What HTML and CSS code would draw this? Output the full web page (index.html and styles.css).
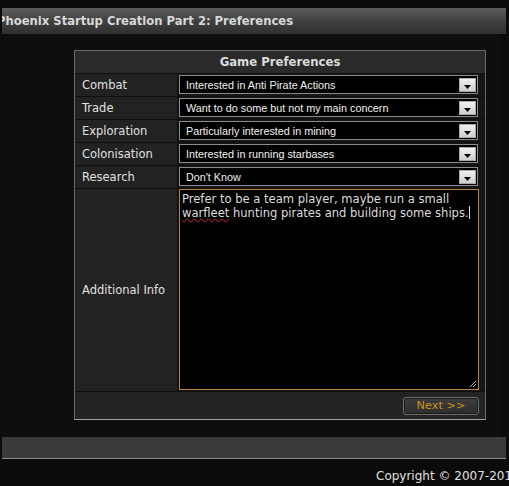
FILE: index.html
```html
<!DOCTYPE html>
<html>
<head>
<meta charset="utf-8">
<link rel="stylesheet" href="styles.css">
</head>
<body>
<div class="page">
  <div class="header"><span class="header-text">Phoenix Startup Creation Part 2: Preferences</span></div>
  <div class="main">
    <div class="panel">
      <div class="panel-title">Game Preferences</div>
      <div class="row">
        <div class="label">Combat</div>
        <div class="field"><div class="select"><span class="select-text">Interested in Anti Pirate Actions</span><span class="select-btn"><svg width="7" height="4" viewBox="0 0 7 4"><path d="M0 0H7L3.5 4Z" fill="#000"/></svg></span></div></div>
      </div>
      <div class="row">
        <div class="label">Trade</div>
        <div class="field"><div class="select"><span class="select-text">Want to do some but not my main concern</span><span class="select-btn"><svg width="7" height="4" viewBox="0 0 7 4"><path d="M0 0H7L3.5 4Z" fill="#000"/></svg></span></div></div>
      </div>
      <div class="row">
        <div class="label">Exploration</div>
        <div class="field"><div class="select"><span class="select-text">Particularly interested in mining</span><span class="select-btn"><svg width="7" height="4" viewBox="0 0 7 4"><path d="M0 0H7L3.5 4Z" fill="#000"/></svg></span></div></div>
      </div>
      <div class="row">
        <div class="label">Colonisation</div>
        <div class="field"><div class="select"><span class="select-text">Interested in running starbases</span><span class="select-btn"><svg width="7" height="4" viewBox="0 0 7 4"><path d="M0 0H7L3.5 4Z" fill="#000"/></svg></span></div></div>
      </div>
      <div class="row">
        <div class="label">Research</div>
        <div class="field"><div class="select"><span class="select-text">Don't Know</span><span class="select-btn"><svg width="7" height="4" viewBox="0 0 7 4"><path d="M0 0H7L3.5 4Z" fill="#000"/></svg></span></div></div>
      </div>
      <div class="row row-tall">
        <div class="label label-mid">Additional Info</div>
        <div class="field field-tall">
          <div class="textarea">Prefer to be a team player, maybe run a small <span class="misspelled">warfleet</span> hunting pirates and building some ships.<span class="caret"></span>
            <svg class="grip" width="9" height="9" viewBox="0 0 9 9"><path d="M8 2L2 8M8 5L5 8" stroke="#aaa" stroke-width="1"/></svg>
          </div>
        </div>
      </div>
      <div class="row-actions">
        <div class="next-btn">Next &gt;&gt;</div>
      </div>
    </div>
  </div>
  <div class="bottom-bar"></div>
  <div class="footer">Copyright © 2007-2013</div>
</div>
</body>
</html>
```

FILE: styles.css
```css
html, body {
  margin: 0;
  padding: 0;
  background: #0b0b0b;
  overflow: hidden;
}
body {
  width: 509px;
  height: 486px;
  font-family: "DejaVu Sans", Verdana, sans-serif;
  color: #dcdcdc;
}
.page {
  padding-top: 8px;
}
.header {
  margin-left: 2px;
  width: 504px;
  height: 26px;
  background: linear-gradient(#5c5c5c, #3e3e3e 55%, #303030);
  overflow: hidden;
  white-space: nowrap;
  display: flex;
  align-items: center;
}
.header-text {
  margin-left: -5px;
  font-weight: bold;
  font-size: 11.6px;
  color: #d8d8d8;
}
.main {
  width: 500px;
  padding-top: 16px;
  padding-bottom: 17px;
  background: #0e0e0e;
}
.panel {
  margin-left: 74px;
  width: 410px;
  border: 1px solid #6a6a6a;
  border-bottom-color: #a0a0a0;
  background: #1a1a1a;
}
.panel-title {
  height: 22px;
  line-height: 22px;
  text-align: center;
  font-weight: bold;
  font-size: 11.7px;
  background: #2a2a2a;
  border-bottom: 1px solid #111;
  color: #dadada;
}
.row {
  display: flex;
  height: 22px;
  border-bottom: 1px solid #0f0f0f;
}
.label {
  width: 95px;
  padding-left: 7px;
  background: #222;
  border-right: 1px solid #111;
  font-size: 11.5px;
  line-height: 22px;
  color: #e0e0e0;
}
.field {
  flex: 1;
  padding: 1px 7px 2px 1px;
  background: #161616;
}
.select {
  height: 17px;
  border: 1px solid #8a8a8a;
  background: #000;
  display: flex;
  align-items: center;
  justify-content: space-between;
}
.select-text {
  padding-left: 6px;
  font-family: "Liberation Sans", Arial, sans-serif;
  font-size: 10.8px;
  color: #f0f0f0;
}
.select-btn {
  width: 17px;
  height: 14px;
  margin-right: 1px;
  background: linear-gradient(#f0f0f0, #cfcfcf);
  border: 1px solid #a8a8a8;
  box-sizing: border-box;
  display: flex;
  align-items: flex-end;
  justify-content: center;
  padding-bottom: 2px;
}
.row-tall {
  height: 202px;
}
.label-mid {
  display: flex;
  align-items: center;
}
.field-tall {
  padding: 0 6px 1px 1px;
}
.textarea {
  position: relative;
  height: 196px;
  border: 1px solid #b5823c;
  background: #000;
  padding: 3px 2px 0 2px;
  font-size: 11.55px;
  line-height: 13px;
  color: #dcdcdc;
}
.misspelled {
  text-decoration: underline wavy #d02020;
  text-underline-offset: 1px;
  text-decoration-thickness: 1px;
}
.caret {
  display: inline-block;
  width: 1px;
  height: 13px;
  background: #ddd;
  vertical-align: -2px;
}
.grip {
  position: absolute;
  right: 1px;
  bottom: 1px;
}
.row-actions {
  height: 27px;
  background: #232323;
  display: flex;
  justify-content: flex-end;
  align-items: center;
  padding-right: 6px;
}
.next-btn {
  width: 74px;
  height: 16px;
  border: 1px solid #6e6e6e;
  border-radius: 3px;
  background: linear-gradient(#3c3c3c, #2e2e2e);
  box-shadow: inset 0 0 0 1px #1a1a1a;
  color: #c8961e;
  font-size: 11.3px;
  line-height: 16px;
  text-align: center;
  margin-top: 1px;
}
.bottom-bar {
  margin-left: 2px;
  width: 504px;
  height: 21px;
  background: #3a3a3a;
  border-bottom: 1px solid #8a8a8a;
}
.footer {
  padding-left: 376px;
  padding-top: 10px;
  white-space: nowrap;
  font-size: 12px;
  color: #e0e0e0;
}
```
